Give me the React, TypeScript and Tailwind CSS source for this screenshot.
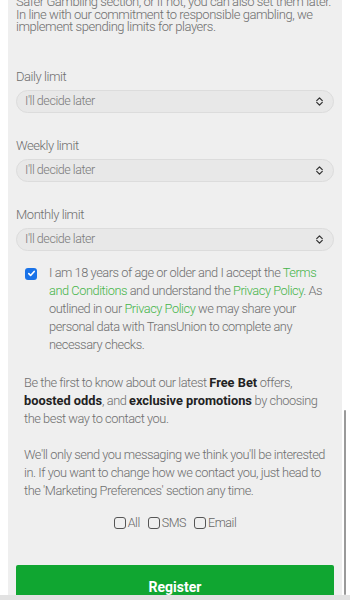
import React from 'react';

const font = { fontFamily: 'Roboto, "Noto Sans", sans-serif' };

function UpDown() {
  return (
    <svg width="11" height="11" viewBox="0 0 12 12" fill="none" stroke="#333" strokeWidth="1.4" strokeLinecap="round" strokeLinejoin="round">
      <path d="M3 5l3-3 3 3" />
      <path d="M3 7l3 3 3-3" />
    </svg>
  );
}

function LimitSelect({ label }: { label: string }) {
  return (
    <div className="flex flex-col">
      <label className="text-[13px] leading-[18px] text-[#6e6e6e] mb-1">{label}</label>
      <div className="flex items-center justify-between h-[23px] rounded-full border border-[#dcdcdc] bg-[#e8e8e8] pl-2 pr-2">
        <span className="text-[12.5px] text-[#7a7a7a]">I'll decide later</span>
        <UpDown />
      </div>
    </div>
  );
}

function Box({ label }: { label: string }) {
  return (
    <label className="flex items-center gap-[2px]">
      <span className="w-[12px] h-[12px] rounded-[3px] border border-[#555] bg-[#efefef]" />
      <span>{label}</span>
    </label>
  );
}

export default function App() {
  return (
    <div className="min-h-screen bg-white px-2 overflow-hidden font-light tracking-[-0.45px]" style={font}>
      <div className="bg-[#efefef] px-2 pb-10 -mt-[4px]">
        <p className="text-[13px] leading-[12.5px] text-[#6e6e6e]">
          Safer Gambling section, or if not, you can also set them later. In line with our commitment to responsible gambling, we implement spending limits for players.
        </p>

        <div className="flex flex-col gap-6 mt-[34px]">
          <LimitSelect label="Daily limit" />
          <LimitSelect label="Weekly limit" />
          <LimitSelect label="Monthly limit" />
        </div>

        <div className="flex gap-3 mt-[13px] pl-[9px] text-[12.8px] leading-[18px] text-[#6e6e6e]">
          <span className="mt-[4px] shrink-0 w-[12px] h-[12px] rounded-[3px] bg-[#1a73e8] flex items-center justify-center">
            <svg width="9" height="9" viewBox="0 0 10 10" fill="none" stroke="white" strokeWidth="1.8" strokeLinecap="round" strokeLinejoin="round">
              <path d="M2 5.2l2 2 4-4.5" />
            </svg>
          </span>
          <p>
            I am 18 years of age or older and I accept the <span className="text-[#46b44a]">Terms and Conditions</span> and understand the <span className="text-[#46b44a]">Privacy Policy</span>. As outlined in our <span className="text-[#46b44a]">Privacy Policy</span> we may share your personal data with TransUnion to complete any necessary checks.
          </p>
        </div>

        <div className="px-2 mt-5 text-[12.8px] leading-[18px] text-[#6e6e6e]">
          <p>
            Be the first to know about our latest <b className="text-[#222] font-bold tracking-normal">Free Bet</b> offers, <b className="text-[#222] font-bold tracking-normal">boosted odds</b>, and <b className="text-[#222] font-bold tracking-normal">exclusive promotions</b> by choosing the best way to contact you.
          </p>
          <p className="mt-[18px]">
            We'll only send you messaging we think you'll be interested in. If you want to change how we contact you, just head to the 'Marketing Preferences' section any time.
          </p>
        </div>

        <div className="flex justify-center gap-2 mt-[14px] text-[12.5px] text-[#666]">
          <Box label="All" />
          <Box label="SMS" />
          <Box label="Email" />
        </div>

        <button className="mt-[33px] w-full h-[44px] rounded-[2px] bg-[#10a631] text-white font-bold tracking-normal text-[14px]">
          Register
        </button>
      </div>

      <div className="fixed right-[4px] top-[410px] w-[2px] h-[185px] bg-[#9a9a9a] rounded" />
      <div className="fixed bottom-0 left-0 w-full h-[5px] bg-[#e2e2e2]" />
    </div>
  );
}
